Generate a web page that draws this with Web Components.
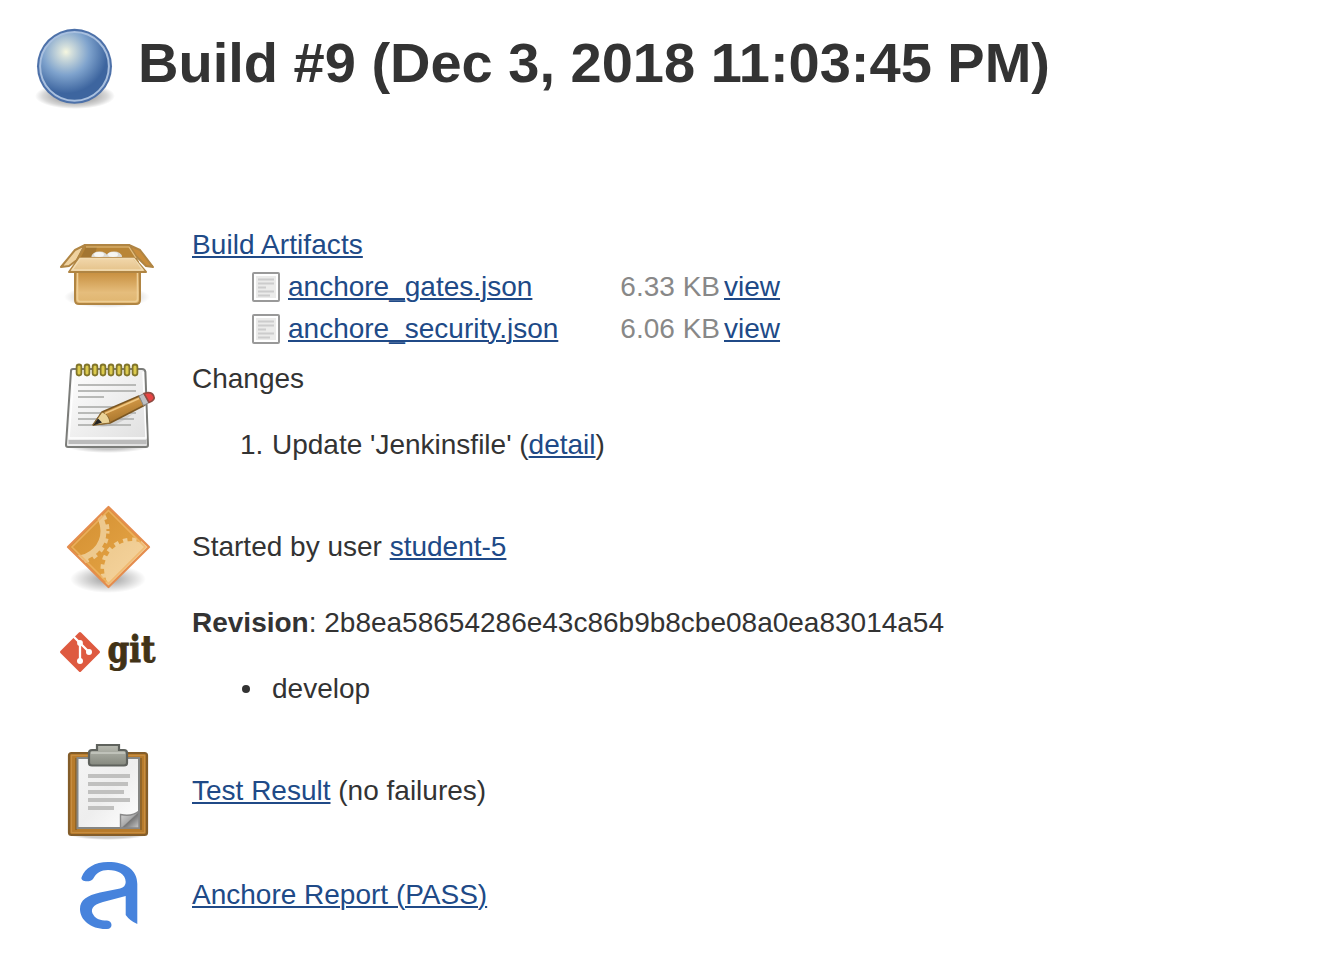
<!DOCTYPE html>
<html lang="en">
<head>
<meta charset="utf-8">
<title>Build #9</title>
<style>
body{margin:0;background:#fff;color:#333;font:28px/32px "Liberation Sans",Arial,sans-serif}
</style>
</head>
<body>
<build-page></build-page>
<script>
const art = {
ball:`<svg width="84" height="90" viewBox="34 24 84 90"><defs><radialGradient id="a" gradientUnits="userSpaceOnUse" cx="66" cy="52" r="46"><stop offset="0" stop-color="#f6f7e0"/><stop offset=".12" stop-color="#d5e0dc"/><stop offset=".5" stop-color="#7fa3cd"/><stop offset=".9" stop-color="#3d659f"/></radialGradient><radialGradient id="s"><stop offset=".3" stop-color="#000" stop-opacity=".4"/><stop offset=".8" stop-color="#000" stop-opacity=".15"/><stop offset="1" stop-color="#000" stop-opacity="0"/></radialGradient></defs><ellipse cx="75" cy="96" rx="40" ry="13" fill="url(#s)"/><circle cx="74.5" cy="66.3" r="37.5" fill="#4d71a9"/><circle cx="74.5" cy="66.3" r="34.4" fill="url(#a)" stroke="#a9c0df" stroke-width="2"/></svg>`,
box:`<svg width="96" height="96" viewBox="60 226 96 96"><defs><linearGradient id="f" x2="0" y2="1"><stop stop-color="#c68c3b"/><stop offset=".65" stop-color="#e5bd7c"/><stop offset="1" stop-color="#dfb46e"/></linearGradient><linearGradient id="l" x2="0" y2="1"><stop stop-color="#f1d7ab"/><stop offset="1" stop-color="#e4c187"/></linearGradient><radialGradient id="s"><stop offset=".4" stop-color="#000" stop-opacity=".24"/><stop offset="1" stop-color="#000" stop-opacity="0"/></radialGradient></defs><ellipse cx="107" cy="297" rx="43" ry="11" fill="url(#s)"/><g stroke="#b08543" stroke-width="2" stroke-linejoin="round"><path d="M85 245 75 250 61 267 69 266 77 260z" fill="#efd2a0"/><path d="M129 245 140 250 153 267 146 266 136 256z" fill="#c98d3c"/><path d="M75 271H140V300Q140 304 136 304H79Q75 304 75 300z" fill="url(#f)"/><path d="M85 245H129L138 262H76z" fill="#b98536"/></g><path d="M86 247 80 259 94 257 97 247z" fill="#a37632"/><path d="M86 247H129L136 258" fill="none" stroke="#e4bf80" stroke-width="1.2"/><path d="M77.5 273V299Q77.5 301.5 80 301.5H135Q137.5 301.5 137.5 299V273" fill="none" stroke="#edce95" stroke-width="1.6"/><ellipse cx="99.5" cy="256.5" rx="8" ry="5" fill="#dcdbd6"/><ellipse cx="114" cy="256.5" rx="8" ry="5" fill="#dcdbd6"/><ellipse cx="99" cy="254.500" rx="5" ry="2.500" fill="#f6f6f3"/><ellipse cx="113" cy="254.500" rx="5" ry="2.500" fill="#f6f6f3"/><path d="M79 258H134L146 272H69z" fill="url(#l)" stroke="#b08543" stroke-width="2" stroke-linejoin="round"/><path d="M80 258.500H134L143 270H72z" fill="none" stroke="#f2dcb2" stroke-width="1.500"/></svg>`,
notes:`<svg width="96" height="96" viewBox="60 358 96 96"><defs><linearGradient id="p" x2="1" y2="1"><stop stop-color="#fff"/><stop offset="1" stop-color="#dedede"/></linearGradient><linearGradient id="w" x2=".5" y2="1"><stop stop-color="#e9b96e"/><stop offset=".5" stop-color="#c99040"/><stop offset="1" stop-color="#a06f28"/></linearGradient><radialGradient id="s"><stop offset=".5" stop-color="#000" stop-opacity=".22"/><stop offset="1" stop-color="#000" stop-opacity="0"/></radialGradient></defs><ellipse cx="108" cy="446" rx="42" ry="7" fill="url(#s)"/><path d="M73 369H142Q145 369 145.400 372L148 445Q148 447 146 447H68Q66 447 66 445L71 371Q71 369 73 369z" fill="url(#p)" stroke="#7b7c79" stroke-width="2"/><path d="M74 372 69 438H146L143 372" fill="none" stroke="#fff" stroke-width="1.5"/><path d="M68.500 440H146.500V444H68.500z" fill="#bbb"/><path d="M78 385H136M78 391H136M78 397H104M78 407H136M78 413H136M78 419H134M78 425H131" stroke="#b8b9b7" stroke-width="2"/><g fill="#dccb4e" stroke="#81752b" stroke-width="1.8">${[0,1,2,3,4,5,6,7].map(i=>`<rect x="${76.6+i*8}" y="364.500" width="4.800" height="11" rx="2.400"/>`).join('')}</g><path d="M97 426Q112 430 133 414L117 417z" fill="#aaa" opacity=".4"/><path d="M93 425 102 412 139 396 145 405 110 423z" fill="url(#w)" stroke="#7b5723" stroke-width="1.5" stroke-linejoin="round"/><path d="M93 425 102 412Q109 414 110 423z" fill="#ead398" stroke="#8b672e" stroke-width="1"/><path d="M93 425.500 98 418.500 102 422.500z" fill="#222"/><path d="M105 413.500 139 398.500" stroke="#f0c781" stroke-width="1.5"/><path d="M139 396 144 393.500 149 402.500 143.500 405.500z" fill="#bfc0c2" stroke="#888" stroke-width="1"/><path d="M144 393.500Q151 391 153.500 395.500T149 402.500z" fill="#e84444" stroke="#8f4b42" stroke-width="1.6"/></svg>`,
gear:`<svg width="96" height="96" viewBox="60 500 96 96"><defs><linearGradient id="g" x2="1" y2="1"><stop stop-color="#d18d2f"/><stop offset="1" stop-color="#eaaa4b"/></linearGradient><linearGradient id="h" x2="1" y2="1"><stop stop-color="#edc98e"/><stop offset="1" stop-color="#fad9a5"/></linearGradient><radialGradient id="s"><stop offset=".2" stop-color="#000" stop-opacity=".32"/><stop offset="1" stop-color="#000" stop-opacity="0"/></radialGradient><clipPath id="c"><path d="M108.500 507 149 547 108.500 587 68 547z"/></clipPath></defs><ellipse cx="108" cy="579" rx="38" ry="14" fill="url(#s)"/><g clip-path="url(#c)"><path d="M68 506H150V588H68z" fill="url(#g)"/><circle cx="76" cy="531" r="27.500" fill="none" stroke="#edc98e" stroke-width="6"/><circle cx="76" cy="531" r="31" fill="none" stroke="#edc98e" stroke-width="5" stroke-dasharray="4.500 5" stroke-dashoffset="2"/><circle cx="132" cy="569" r="28" fill="url(#h)"/><circle cx="132" cy="569" r="29" fill="none" stroke="#efcd94" stroke-width="5" stroke-dasharray="4.400 4.710"/></g><path d="M108.500 510.500 145 547 108.500 583.500 72 547z" fill="none" stroke="#f0b466" stroke-width="1.6" opacity=".8"/><path d="M108.500 507 149 547 108.500 587 68 547z" fill="none" stroke="#e58d4e" stroke-width="2.200" stroke-linejoin="round"/></svg>`,
git:`<svg width="96" height="96" viewBox="60 604 96 96"><path d="M80 633.500 98.500 652 80 670.500 61.500 652z" fill="#de5a40" stroke="#de5a40" stroke-width="3" stroke-linejoin="round"/><path d="M73 636 80 643V661M80 643 89 652" fill="none" stroke="#fff" stroke-width="2.300"/><g fill="#fff"><circle cx="80" cy="643" r="2.900"/><circle cx="80" cy="661" r="3"/><circle cx="89" cy="652" r="3"/></g><text x="107.500" y="661.500" textLength="48" lengthAdjust="spacingAndGlyphs" font-family="DejaVu Serif" font-weight="bold" font-size="36.500" fill="#413216" stroke="#413216" stroke-width=".9">git</text></svg>`,
clip:`<svg width="96" height="96" viewBox="60 742 96 96"><defs><linearGradient id="m" x2="0" y2="1"><stop stop-color="#b9bbb2"/><stop offset="1" stop-color="#85887e"/></linearGradient><linearGradient id="k" x2="1" y2="1"><stop stop-color="#ddd"/><stop offset=".5" stop-color="#aaa"/><stop offset=".55" stop-color="#777"/><stop offset="1" stop-color="#ccc"/></linearGradient><linearGradient id="p" x2="1" y2="1"><stop stop-color="#f4f4f4"/><stop offset=".5" stop-color="#eee"/><stop offset="1" stop-color="#fff"/></linearGradient><radialGradient id="s"><stop offset=".7" stop-color="#000" stop-opacity=".2"/><stop offset="1" stop-color="#000" stop-opacity="0"/></radialGradient></defs><ellipse cx="108" cy="834" rx="40" ry="6" fill="url(#s)"/><rect x="69" y="753" width="78" height="82" rx="2.500" fill="#b77b2b" stroke="#835d2a" stroke-width="2.200"/><rect x="71.500" y="755.500" width="73" height="77" fill="none" stroke="#c68d42" stroke-width="1.200"/><path d="M76 758V830M141 758V830" stroke="#926629" stroke-width="2"/><path d="M77.500 758H139V828H77.500z" fill="url(#p)" stroke="#858684" stroke-width="2"/><path d="M88 776H130M88 784H128M88 792H124M88 800H130M88 808H114" stroke="#c0c0bf" stroke-width="4"/><path d="M120.500 828V814.500Q132 817 139 811V828z" fill="url(#k)" stroke="#888" stroke-width="1.400"/><path d="M97 750V745H119V750H124Q127 750 127 753V763Q127 765.500 124 765.500H92Q89 765.500 89 763V753Q89 750 92 750z" fill="url(#m)" stroke="#5f625d" stroke-width="2.200"/><path d="M91 753H125" stroke="#c9cbc3" stroke-width="1.400"/></svg>`,
anchor:`<svg width="96" height="96" viewBox="60 848 96 96"><path d="M81.700 877C85 868 95 862 108 862C126 862 137.300 870 137.300 884V924Q130 921 125.700 915V896L103 902C92 905 90 910 93.500 915C96 919 100 920.500 107 920.500C113 921 113 929 107 929C91 929.500 80 920 80 909C80 900 87 895.500 100 892.500L120 888.500Q125.700 887 125.700 882C125.700 874 118 870 108 870C101 870 96 873 93 879C90 883 79.500 881.500 81.700 877z" fill="#4783dc"/></svg>`,
doc:`<svg width="28" height="32" viewBox="0 0 28 32"><rect x="1" y="2" width="26" height="28" rx="1" fill="#fff" stroke="#999" stroke-width="2"/><rect x="4" y="5" width="20" height="22" fill="#ebebea"/><path d="M6 8.500H22M6 12.500H22M6 16.500H14M6 20.500H22M6 24.500H18" stroke="#ccc" stroke-width="2"/></svg>`
};

function define(name, css, html) {
  customElements.define(name, class extends HTMLElement {
    constructor() {
      super();
      this.attachShadow({mode:'open'}).innerHTML = `<style>${css}</style>` + (typeof html === 'function' ? html(this) : html);
    }
  });
}

define('ui-icon', ':host{display:block;flex:none}svg{display:block;overflow:visible}', el => art[el.getAttribute('name')]);
define('ui-link', ':host{display:inline}a{color:#204a87;text-decoration:underline;text-decoration-thickness:2px;text-underline-offset:2px}', '<a href="#"><slot></slot></a>');
define('build-header', ':host{display:flex;box-sizing:border-box;height:226px;padding:24px 0 0 34px;gap:20px}h1{margin:7px 0 0;font-size:56px;line-height:64px;white-space:nowrap}',
  '<ui-icon name="ball"></ui-icon><h1><slot></slot></h1>');
define('summary-row', ':host{display:flex;box-sizing:border-box;padding-left:60px;gap:36px;height:var(--h)}.body{padding-top:var(--top);white-space:nowrap}',
  el => `<ui-icon name="${el.getAttribute('icon')}"></ui-icon><div class="body"><slot></slot></div>`);
define('artifact-row', ':host{display:grid;grid-template-columns:28px 340px 100px auto;align-items:center;height:32px;margin:10px 0 0 60px}.name{padding-left:8px}.size{color:#888;text-align:right}.view{padding-left:4px}',
  '<ui-icon name="doc"></ui-icon><span class="name"><ui-link><slot></slot></ui-link></span><span class="size"><slot name="size"></slot></span><span class="view"><ui-link>view</ui-link></span>');
define('list-item', ':host{display:flex;margin-top:34px;padding-left:48px}.mark{width:32px;flex:none}.dot{box-sizing:border-box;width:32px;padding:12px 0 0 2px}.dot::before{content:"";display:block;width:8px;height:8px;border-radius:50%;background:#333}',
  el => (el.hasAttribute('number') ? `<span class="mark">${el.getAttribute('number')}.</span>` : '<span class="dot"></span>') + '<div><slot></slot></div>');
define('build-page', `:host{display:block;height:968px;overflow:hidden}`, `
<build-header>Build #9 (Dec 3, 2018 11:03:45 PM)</build-header>
<summary-row icon="box" style="--h:132px;--top:3px"><ui-link style="letter-spacing:.08px">Build Artifacts</ui-link>
<artifact-row>anchore_gates.json<span slot="size">6.33 KB</span></artifact-row>
<artifact-row>anchore_security.json<span slot="size">6.06 KB</span></artifact-row></summary-row>
<summary-row icon="notes" style="--h:142px;--top:5px">Changes<list-item number="1">Update 'Jenkinsfile' (<ui-link>detail</ui-link>)</list-item></summary-row>
<summary-row icon="gear" style="--h:104px;--top:31px">Started by user <ui-link>student-5</ui-link></summary-row>
<summary-row icon="git" style="--h:138px;--top:3px"><b>Revision</b>: 2b8ea58654286e43c86b9b8cbe08a0ea83014a54<list-item>develop</list-item></summary-row>
<summary-row icon="clip" style="--h:106px;--top:33px"><ui-link>Test Result</ui-link> (no failures)</summary-row>
<summary-row icon="anchor" style="--h:120px;--top:31px"><ui-link>Anchore Report (PASS)</ui-link></summary-row>`);
</script>
</body>
</html>
